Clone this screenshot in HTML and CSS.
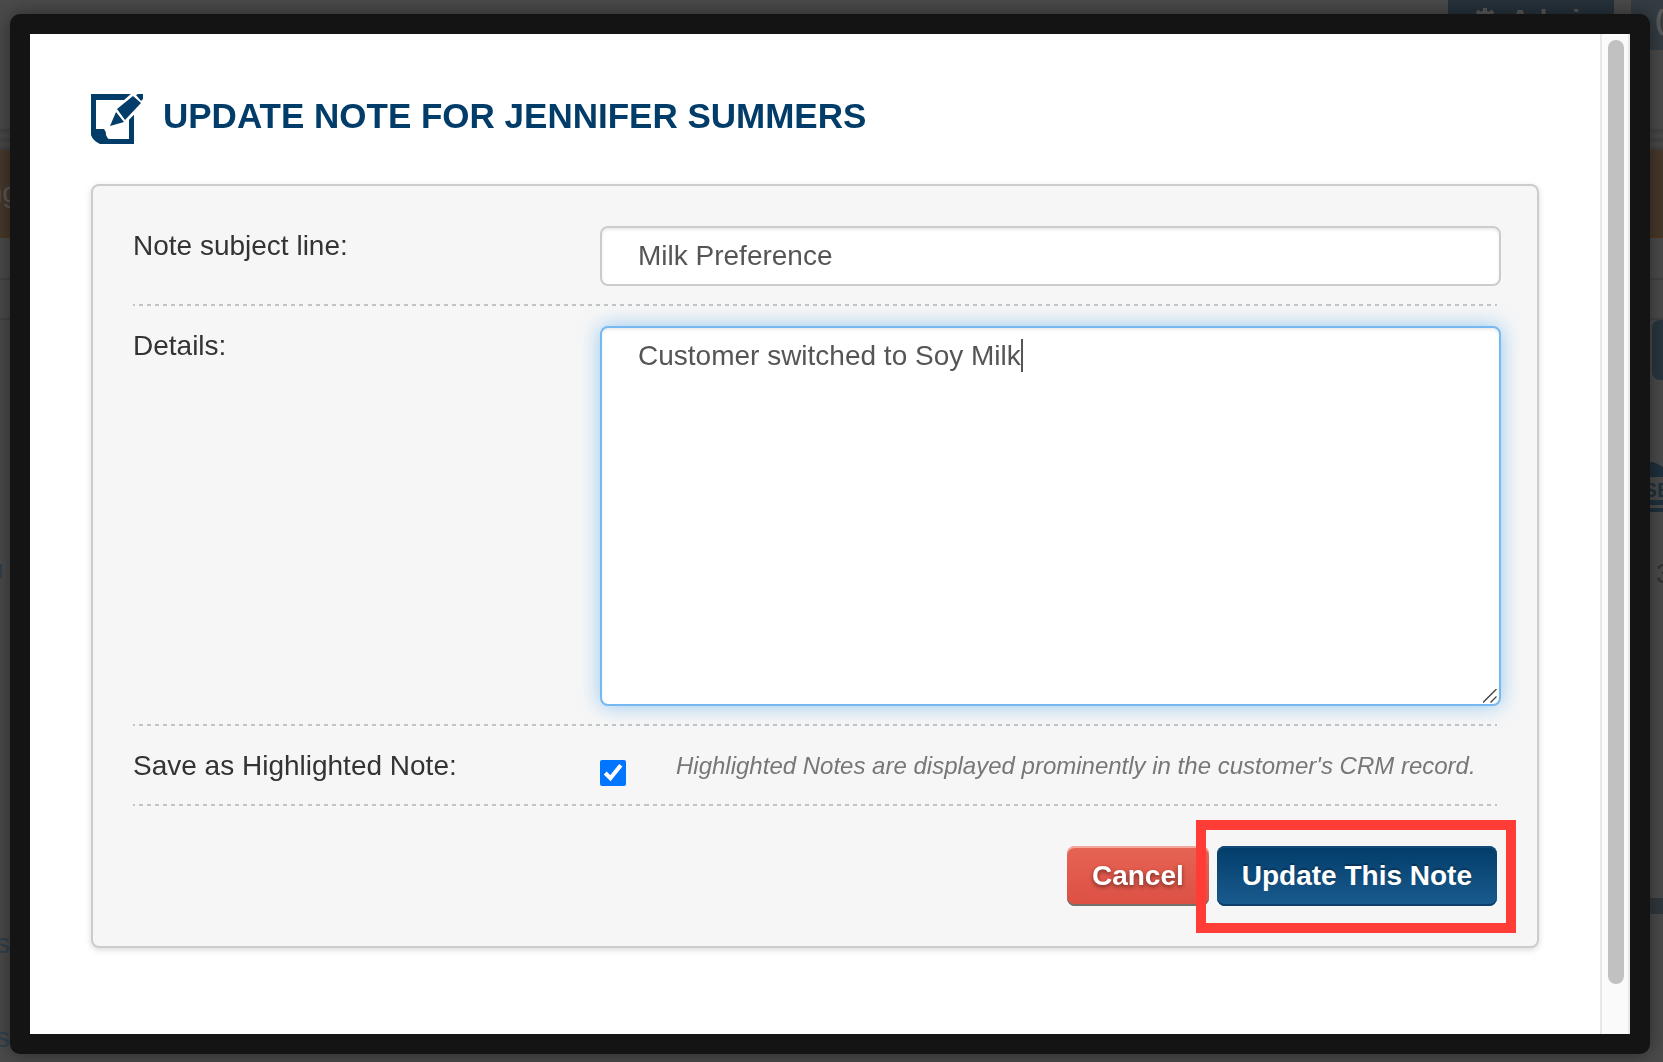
FILE: index.html
```html
<!DOCTYPE html>
<html lang="en">
<head>
    <meta charset="UTF-8">
    <title>Update Note</title>
    <link rel="stylesheet" href="styles.css">
</head>
<body>
<!-- page behind the popup -->
<div class="page" aria-hidden="true">
    <div class="page-header">
        <div class="tab">
            <svg width="22" height="22" viewBox="0 0 22 22"><circle cx="11" cy="11" r="6" fill="none" stroke="#5a5a5a" stroke-width="5"/><path d="M11 0v22M0 11h22M3 3l16 16M19 3L3 19" stroke="#5a5a5a" stroke-width="4"/><circle cx="11" cy="11" r="4" fill="#27323b"/></svg>
            Admin
        </div>
        <div class="tab tab-user">(</div>
    </div>
    <div class="page-nav"><span>ng</span></div>
    <div class="page-sub"></div>
    <div class="page-main">
        <div class="side side-left">
            <i class="mark"></i>
            <span>s</span>
            <span>s</span>
        </div>
        <div class="side side-right">
            <i class="pill"></i>
            <svg class="badge" width="13" height="50" viewBox="0 0 13 50"><path d="M0 0h3q6 2 10 5v10H0zM0 38h13v5H0zM0 46h13v4H0z" fill="#20303d"/><text x="-7" y="35" font-size="21" font-weight="bold" fill="#20303d">SE</text></svg>
            <span class="count">3</span>
            <i class="bar"></i>
        </div>
    </div>
</div>

<div class="modal" role="dialog" aria-labelledby="title">
    <div class="content">
        <h1 class="title" id="title">
            <svg class="title-icon" width="52" height="50" viewBox="0 0 52 50">
                <path fill="#023c69" fill-rule="evenodd" d="M0 0H43V50H9Q2 47 0 41ZM5 6V35H13Q15 37 15 41Q16 44 18 45H38V6Z"/>
                <path fill="#fff" d="M41 -1L25 13L17 34L36 28L44 20L53 10V-1Z"/>
                <path fill="#023c69" d="M38 26L43 21V28H38ZM19 32L25 18L33 28ZM26 15L42 2L50 9L34 26ZM45 1L47 0H52V5L50 7Z"/>
            </svg>
            UPDATE NOTE FOR JENNIFER SUMMERS
        </h1>
        <form class="panel">
            <div class="row">
                <label for="subject">Note subject line:</label>
                <div class="field"><input class="text" type="text" id="subject" value="Milk Preference"></div>
            </div>
            <div class="row">
                <label for="details">Details:</label>
                <div class="field">
                    <textarea class="text details" id="details">Customer switched to Soy Milk</textarea>
                    <i class="caret"></i>
                    <svg class="grip" width="14" height="14" viewBox="0 0 14 14"><path d="M0 13.5L13.5 0M7.5 13.5L13.5 7.5" stroke="#444" stroke-width="1.4"/></svg>
                </div>
            </div>
            <div class="row row-check">
                <label for="highlight">Save as Highlighted Note:</label>
                <div class="field check">
                    <input type="checkbox" id="highlight" checked>
                    <em>Highlighted Notes are displayed prominently in the customer's CRM record.</em>
                </div>
            </div>
            <div class="buttons">
                <button type="button" class="btn cancel">Cancel</button>
                <div class="marked"><button type="submit" class="btn update">Update This Note</button></div>
            </div>
        </form>
    </div>
    <div class="scroll"><div class="thumb"></div></div>
</div>
</body>
</html>
```
FILE: styles.css
```css
html,body{height:100%;overflow:hidden;}
body,h1,form{margin:0;padding:0;}
*{box-sizing:border-box;}
body,input,textarea,button{font-family:"Liberation Sans",Arial,sans-serif;font-size:28px;line-height:40px;}
body{background:#4b4b4b;color:#333;}

/* dimmed page */
.page{display:flex;flex-direction:column;height:100%;overflow:hidden;}
.page-header{display:flex;justify-content:flex-end;gap:17px;height:150px;flex:none;background:linear-gradient(#4b4b4b 128px,#424242 130px,#4b4b4b 136px,#424242 140px,#4b4b4b 144px,#3f3f3f 150px);}
.tab{display:flex;gap:14px;width:166px;height:50px;padding:0 26px;background:#27323b;color:#5a5a5a;font-weight:bold;line-height:40px;}
.tab svg{margin-top:8px;flex:none;}
.tab-user{width:32px;padding:0 0 0 24px;background:#353d43;}
.page-nav{height:88px;flex:none;border-top:4px solid #49392b;border-bottom:2px solid #4d3822;background:#47382b;}
.page-nav span{display:flex;justify-content:flex-end;width:18px;line-height:78px;color:#5a5a5a;}
.page-sub{height:82px;flex:none;background:linear-gradient(#4b4b4b 40px,#424242 40px,#424242 42px,#4b4b4b 42px);border-bottom:2px solid #424242;}
.page-main{display:flex;justify-content:space-between;flex:1;}
.side{display:flex;flex-direction:column;}
.side-left{align-items:flex-end;width:10px;color:#2f414e;}
.side-left span{margin-top:54px;}
.side-left .mark{width:2px;height:14px;margin:244px 8px 292px 0;background:#2f414e;}
.side-right{width:13px;}
.pill{flex:none;width:30px;height:60px;margin-left:2px;border-radius:8px;background:#29363f;}
.badge{margin-top:82px;}
.count{margin:42px 0 0 6px;}
.bar{height:16px;margin-top:304px;flex:none;background:#31383d;}

/* popup */
.modal{position:fixed;top:14px;right:13px;bottom:8px;left:10px;display:flex;border:20px solid #141414;border-radius:10px;background:#fff;box-shadow:0 0 20px rgba(0,0,0,.45);}
.content{flex:1;padding:50px 61px 0;}
.title{display:flex;align-items:center;gap:20px;height:60px;margin-bottom:40px;color:#023c69;font-size:35px;line-height:60px;padding-top:4px;}
.title-icon{flex:none;margin-top:6px;}
.panel{padding:20px 40px 40px;border:2px solid #ccc;border-radius:8px;background:#f6f6f6;box-shadow:0 2px 6px rgba(0,0,0,.15);}
.row{display:flex;padding:20px 0 18px;border-bottom:2px dashed transparent;border-image:repeating-linear-gradient(90deg,#c4c4c4 0,#c4c4c4 4px,transparent 4px,transparent 8px) 2;border-width:0 0 2px;}
.row label{flex:none;width:467px;}
.field{position:relative;flex:1;margin-right:-4px;}
.text{display:block;width:100%;height:60px;padding:8px 36px;border:2px solid #ccc;border-radius:8px;background:#fff;color:#555;box-shadow:inset 0 2px 3px rgba(0,0,0,.08);outline:none;}
.details{height:380px;resize:none;border-color:#75b9f0;box-shadow:inset 0 2px 3px rgba(0,0,0,.08),0 0 20px rgba(82,168,236,.6);}
.caret{position:absolute;top:13px;left:421px;width:2px;height:33px;background:#555;}
.grip{position:absolute;right:4px;bottom:3px;}
.row-check{height:80px;}
.check{display:flex;}
.check input{flex:none;width:26px;height:26px;margin:14px 50px 0 0;accent-color:#0075ff;}
.check em{color:#777;font-size:24px;white-space:nowrap;}
.buttons{display:flex;justify-content:flex-end;gap:8px;padding-top:40px;}
.btn{display:block;height:60px;padding:0 25px;border:0;border-radius:8px;color:#fff;font-weight:bold;}
.cancel{background:linear-gradient(#e66454,#dc5043);box-shadow:inset 0 2px #f2a9a0,inset 0 -2px #76706d;text-shadow:0 2px 4px rgba(0,0,0,.5);}
.update{background:linear-gradient(#023c69,#1a5c8f);box-shadow:inset 0 2px #124b7a,inset 0 -2px #0d416c;text-shadow:0 -2px 1px rgba(0,0,0,.25);}
.marked{position:relative;}
.marked:after{content:"";position:absolute;top:-26px;right:-19px;bottom:-27px;left:-21px;border:10px solid #ff3c36;pointer-events:none;}
.scroll{width:30px;padding:6px 4px 0 6px;border:solid #e8e8e8;border-width:0 2px;background:#fafafa;}
.thumb{width:16px;height:946px;max-height:95%;border-radius:8px;background:#c1c1c1;}
```
